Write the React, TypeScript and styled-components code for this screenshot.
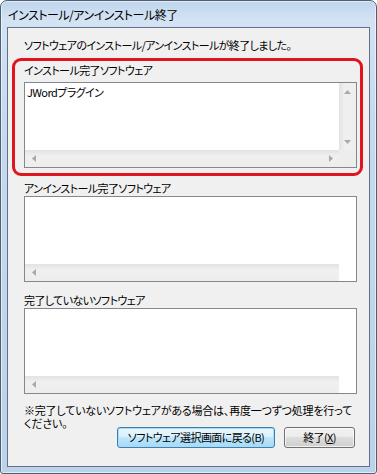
import React from 'react';
import styled, { createGlobalStyle, css } from 'styled-components';

const GlobalStyle = createGlobalStyle`
  html, body {
    margin: 0;
    padding: 0;
    background: #ffffff;
  }
  body {
    font-family: 'Noto Sans CJK JP', 'Noto Sans', sans-serif;
  }
`;

const uiFont = css`
  font-family: 'Noto Sans CJK JP', 'Noto Sans', sans-serif;
  font-size: 11px;
  letter-spacing: -0.6px;
  font-feature-settings: 'palt';
  color: #000000;
`;

const Window = styled.div`
  box-sizing: border-box;
  width: 377px;
  height: 474px;
  display: flex;
  flex-direction: column;
  border: 1px solid #4d6075;
  border-radius: 7px 7px 3px 3px;
  padding: 0 6px 6px;
  background: linear-gradient(180deg, #bfd5ec 0%, #d3e3f4 4%, #c6d9ee 25%, #bcd2ea 100%);
  box-shadow: inset 0 0 0 1px rgba(255, 255, 255, 0.55);
`;

const TitleBar = styled.div`
  ${uiFont};
  font-size: 12px;
  letter-spacing: -0.5px;
  height: 26px;
  display: flex;
  align-items: center;
  padding-left: 1px;
  white-space: nowrap;
`;

const Client = styled.div`
  flex: 1;
  display: flex;
  flex-direction: column;
  border: 1px solid #5f7289;
  background: #f0f0f0;
  min-height: 0;
`;

const Message = styled.div`
  ${uiFont};
  line-height: 16px;
  margin: 9px 0 0 16px;
  white-space: nowrap;
`;

const Highlight = styled.div`
  margin: 5px 6px 0 4px;
  border: 3px solid #e0141e;
  border-radius: 9px;
  padding: 1px 2px 5px 9px;
`;

const SectionLabel = styled.div<{ $gap?: number; $indent?: number; $line?: number }>`
  ${uiFont};
  line-height: ${(p) => p.$line ?? 16}px;
  margin: ${(p) => p.$gap ?? 0}px 0 0 ${(p) => p.$indent ?? 0}px;
  white-space: nowrap;
`;

const InnerLabel = styled(SectionLabel)`
  margin-bottom: 4px;
`;

const ListFrame = styled.div<{ $indent?: number }>`
  box-sizing: border-box;
  width: 333px;
  height: 86px;
  margin-left: ${(p) => p.$indent ?? 0}px;
  border: 1px solid #828790;
  background: #ffffff;
  display: grid;
  grid-template-columns: 1fr 17px;
  grid-template-rows: 1fr 17px;
`;

const Items = styled.div<{ $wide: boolean }>`
  grid-column: ${(p) => (p.$wide ? '1 / 3' : '1 / 2')};
  padding: 2px 2px 0;
  overflow: hidden;
`;

const Item = styled.div`
  ${uiFont};
  line-height: 14px;
  white-space: nowrap;
`;

const VScroll = styled.div`
  display: flex;
  flex-direction: column;
  justify-content: space-between;
  background: linear-gradient(90deg, #e2e2e2 0%, #f0f0f0 35%, #ededed 100%);
`;

const HScroll = styled.div`
  display: flex;
  justify-content: space-between;
  background: linear-gradient(180deg, #e2e2e2 0%, #f0f0f0 35%, #ededed 100%);
`;

const Corner = styled.div<{ $filled: boolean }>`
  background: ${(p) => (p.$filled ? '#ededed' : '#ffffff')};
`;

const ArrowCell = styled.div`
  width: 17px;
  height: 17px;
  display: flex;
  align-items: center;
  justify-content: center;
`;

const Note = styled.div`
  ${uiFont};
  letter-spacing: -0.2px;
  line-height: 13px;
  margin: 10px 0 0 16px;
  white-space: nowrap;
`;

const ButtonRow = styled.div`
  display: flex;
  justify-content: flex-end;
  gap: 9px;
  margin-top: -3px;
  padding-right: 14px;
`;

const Button = styled.button<{ $width: number; $default?: boolean }>`
  ${uiFont};
  box-sizing: border-box;
  width: ${(p) => p.$width}px;
  height: 21px;
  padding: 0;
  border-radius: 3px;
  border: 1px solid ${(p) => (p.$default ? '#3c7fb1' : '#707070')};
  background: ${(p) =>
    p.$default
      ? 'linear-gradient(180deg, #eaf6fd 0%, #d9f0fc 50%, #bee6fd 50%, #a7d9f5 100%)'
      : 'linear-gradient(180deg, #f2f2f2 0%, #ebebeb 50%, #dddddd 50%, #cfcfcf 100%)'};
  box-shadow: inset 0 0 0 1px ${(p) => (p.$default ? '#a6dcf6' : 'rgba(255,255,255,0.7)')};
  line-height: 19px;
  white-space: nowrap;
`;

const Key = styled.span`
  text-decoration: underline;
`;

type Dir = 'up' | 'down' | 'left' | 'right';

const arrowPoints: Record<Dir, string> = {
  up: '0,4 3.5,0 7,4',
  down: '0,0 7,0 3.5,4',
  left: '4,0 4,7 0,3.5',
  right: '0,0 4,3.5 0,7',
};

function Arrow({ dir }: { dir: Dir }) {
  const vertical = dir === 'up' || dir === 'down';
  return (
    <ArrowCell>
      <svg width={vertical ? 7 : 4} height={vertical ? 4 : 7} viewBox={vertical ? '0 0 7 4' : '0 0 4 7'}>
        <polygon points={arrowPoints[dir]} fill="#a9a9a9" />
      </svg>
    </ArrowCell>
  );
}

interface ListBoxProps {
  items: string[];
  vertical?: boolean;
  indent?: number;
}

function ListBox({ items, vertical = false, indent }: ListBoxProps) {
  return (
    <ListFrame $indent={indent}>
      <Items $wide={!vertical}>
        {items.map((it) => (
          <Item key={it}>{it}</Item>
        ))}
      </Items>
      {vertical && (
        <VScroll>
          <Arrow dir="up" />
          <Arrow dir="down" />
        </VScroll>
      )}
      <HScroll>
        <Arrow dir="left" />
        {vertical && <Arrow dir="right" />}
      </HScroll>
      <Corner $filled={vertical} />
    </ListFrame>
  );
}

export default function App() {
  return (
    <>
      <GlobalStyle />
      <Window>
        <TitleBar>インストール/アンインストール終了</TitleBar>
        <Client>
          <Message>ソフトウェアのインストール/アンインストールが終了しました。</Message>
          <Highlight>
            <InnerLabel>インストール完了ソフトウェア</InnerLabel>
            <ListBox items={['JWordプラグイン']} vertical />
          </Highlight>
          <SectionLabel $gap={4} $indent={16}>
            アンインストール完了ソフトウェア
          </SectionLabel>
          <ListBox items={[]} indent={16} />
          <SectionLabel $gap={11} $indent={16} $line={15}>
            完了していないソフトウェア
          </SectionLabel>
          <ListBox items={[]} indent={16} />
          <Note>
            ※完了していないソフトウェアがある場合は、再度一つずつ処理を行って
            <br />
            ください。
          </Note>
          <ButtonRow>
            <Button $width={158} $default>
              ソフトウェア選択画面に戻る(B)
            </Button>
            <Button $width={71}>
              終了(<Key>X</Key>)
            </Button>
          </ButtonRow>
        </Client>
      </Window>
    </>
  );
}
